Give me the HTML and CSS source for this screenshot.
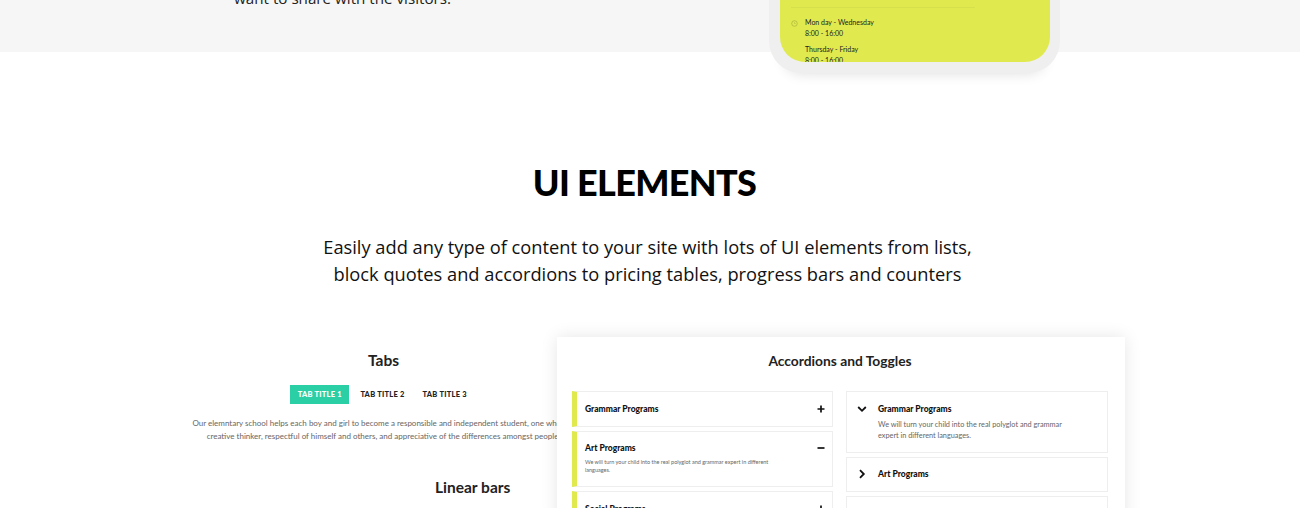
FILE: index.html
```html
<!DOCTYPE html>
<html lang="en">
<head>
<meta charset="utf-8">
<title>UI Elements</title>
<link rel="stylesheet" href="styles.css">
</head>
<body>
<div class="page">
  <section class="band">
    <p class="band-text">want to share with the visitors.</p>
    <div class="phone">
      <div class="screen">
        <div class="rule"></div>
        <div class="hours">
          <svg class="clock" viewBox="0 0 8 8" width="7" height="7"><circle cx="4" cy="4" r="3.2" fill="none" stroke="#a9b23c" stroke-width="0.8"/><path d="M4 2.4V4H5.4" fill="none" stroke="#a9b23c" stroke-width="0.6"/></svg>
          <div class="hours-list">
            <p class="hours-line">Mon day - Wednesday</p>
            <p class="hours-line">8:00 - 16:00</p>
            <p class="hours-line hours-gap">Thursday - Friday</p>
            <p class="hours-line">8:00 - 16:00</p>
          </div>
        </div>
      </div>
    </div>
  </section>

  <header class="intro">
    <h1 class="title">UI ELEMENTS</h1>
    <p class="lead">Easily add any type of content to your site with lots of UI elements from lists,<br>block quotes and accordions to pricing tables, progress bars and counters</p>
  </header>

  <section class="showcase">
    <div class="demo-left">
      <h2 class="demo-title">Tabs</h2>
      <div class="tabs">
        <span class="tab tab-active">TAB TITLE 1</span>
        <span class="tab">TAB TITLE 2</span>
        <span class="tab">TAB TITLE 3</span>
      </div>
      <p class="tab-copy">Our elemntary school helps each boy and girl to become a responsible and independent student, one who is a<br>creative thinker, respectful of himself and others, and appreciative of the differences amongst people.</p>
    </div>
    <h2 class="demo-title bars-title">Linear bars</h2>

    <div class="card">
      <h2 class="card-title">Accordions and Toggles</h2>
      <div class="columns">
        <div class="col col-left">
          <div class="acc acc-one">
            <div class="acc-head"><span class="acc-name">Grammar Programs</span>
              <svg class="sign" viewBox="0 0 8 8" width="8" height="8"><path d="M4 .5V7.500M.5 4H7.500" stroke="#111" stroke-width="1.700" fill="none"/></svg></div>
          </div>
          <div class="acc acc-open">
            <div class="acc-head"><span class="acc-name">Art Programs</span>
              <svg class="sign" viewBox="0 0 8 8" width="8" height="8"><path d="M.5 4H7.500" stroke="#111" stroke-width="1.700" fill="none"/></svg></div>
            <p class="acc-small">We will turn your child into the real polyglot and grammar expert in different languages.</p>
          </div>
          <div class="acc acc-one">
            <div class="acc-head"><span class="acc-name">Social Programs</span>
              <svg class="sign" viewBox="0 0 8 8" width="8" height="8"><path d="M4 .5V7.500M.5 4H7.500" stroke="#111" stroke-width="1.700" fill="none"/></svg></div>
          </div>
        </div>
        <div class="col col-right">
          <div class="tog tog-open">
            <svg class="chev" viewBox="0 0 10 10" width="10" height="10"><path d="M1.200 3L5 6.800 8.800 3" stroke="#111" stroke-width="1.800" fill="none"/></svg>
            <div class="tog-body">
              <span class="acc-name">Grammar Programs</span>
              <p class="tog-copy">We will turn your child into the real polyglot and grammar expert in different languages.</p>
            </div>
          </div>
          <div class="tog">
            <svg class="chev" viewBox="0 0 10 10" width="10" height="10"><path d="M3 1.200L6.800 5 3 8.800" stroke="#111" stroke-width="1.800" fill="none"/></svg>
            <div class="tog-body"><span class="acc-name">Art Programs</span></div>
          </div>
          <div class="tog"></div>
        </div>
      </div>
    </div>
  </section>
</div>
</body>
</html>
```

FILE: styles.css
```css
* { box-sizing: border-box; }
html, body { margin: 0; padding: 0; background: #fff; }
body { height: 508px; overflow: hidden; font-family: "Lato", "Liberation Sans", sans-serif; color: #111; }
p, h1, h2 { margin: 0; font-weight: normal; }
.page { width: 1300px; height: 508px; overflow: hidden; }

.band { position: relative; height: 52px; background: #f6f6f6; }
.band-text { position: absolute; left: 234px; top: -14px; font: 400 15.200px/24px "Open Sans", sans-serif; color: #222; white-space: nowrap; }
.phone { position: absolute; left: 769px; top: -60px; width: 291px; height: 133px; padding: 0 10px 11px 11px; background: #efefef; border-radius: 0 0 32px 32px; box-shadow: 0 16px 14px -16px rgba(0,0,0,.14); }
.screen { height: 100%; padding: 67px 11px 0; background: #e0ea4f; border-radius: 0 0 25px 25px; overflow: hidden; }
.rule { width: 184px; height: 1px; background: #d6df4c; }
.hours { display: flex; align-items: flex-start; gap: 7px; margin-top: 9px; }
.clock { margin-top: 3px; flex: none; }
.hours-list { font-size: 7px; line-height: 11px; color: #222; }
.hours-line { white-space: nowrap; }
.hours-gap { margin-top: 5px; }

.intro { text-align: center; padding-top: 107px; margin-left: -11px; }
.title { font-size: 36px; line-height: 46px; font-weight: 900; color: #000; letter-spacing: -.65px; }
.lead { margin-top: 28px; padding-left: 6px; font: 400 18.280px/27px "Open Sans", sans-serif; color: #111; }

.showcase { position: relative; height: 220px; margin-top: 45px; }
.demo-left { position: absolute; left: 0; top: 18px; width: 767px; text-align: center; }
.demo-title { font-size: 15.500px; line-height: 20px; font-weight: 700; color: #222; }
.tabs { display: flex; justify-content: center; align-items: center; margin-top: 15px; padding-right: 1px; }
.tab { padding: 0 9px; height: 19px; line-height: 19px; font-size: 7.500px; font-weight: 900; letter-spacing: .25px; color: #222; white-space: nowrap; }
.tab-active { background: #2bcfa5; color: #fff; padding: 0 7.500px; margin-right: 2px; }
.tab-copy { margin-top: 13px; font-size: 8px; line-height: 12.500px; color: #666; white-space: nowrap; }
.bars-title { position: absolute; left: 435px; top: 145px; }

.card { position: absolute; left: 557px; top: 5px; width: 568px; height: 240px; padding: 14px 17px 0 15px; background: #fff; box-shadow: 0 0 16px rgba(0,0,0,.1); }
.card-title { font-size: 13.800px; line-height: 20px; font-weight: 700; color: #222; text-align: center; }
.columns { display: flex; gap: 13px; margin-top: 20px; }
.col { display: flex; flex-direction: column; gap: 4px; }
.col-left { width: 261px; }
.col-right { width: 262px; }
.acc { border: 1px solid #eee; border-left: 5px solid #e0ea4f; padding: 0 7px 0 8px; }
.acc-one { height: 36px; }
.acc-one .acc-head { height: 34px; }
.acc-open { height: 56px; }
.acc-open .acc-head { height: 32px; }
.acc-head { display: flex; justify-content: space-between; align-items: center; }
.acc-name { display: block; font-size: 8.500px; line-height: 12px; font-weight: 900; color: #111; white-space: nowrap; }
.acc-small { margin-top: -6px; width: 190px; font-size: 5.500px; line-height: 8px; color: #666; }
.sign { flex: none; }
.tog { display: flex; gap: 11px; height: 35px; border: 1px solid #eee; padding: 10px 0 0 10px; }
.tog-open { height: 62px; padding-top: 11px; }
.chev { flex: none; margin-top: 1px; }
.tog-body { width: 190px; }
.tog-copy { margin-top: 4px; font-size: 7.300px; line-height: 11px; color: #666; }
```
